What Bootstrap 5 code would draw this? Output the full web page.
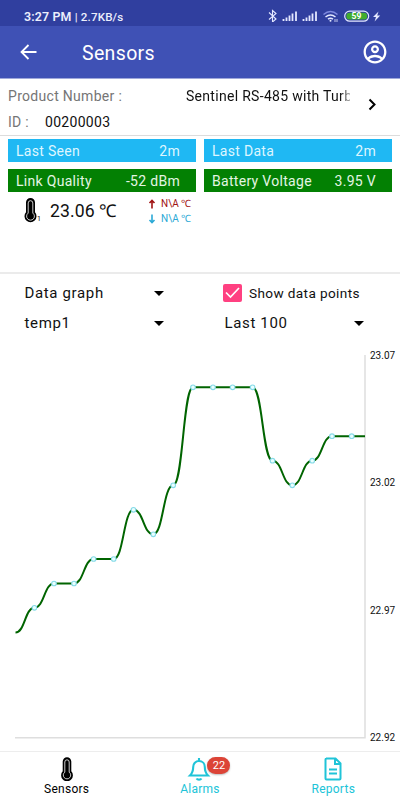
<!DOCTYPE html>
<html lang="en">
<head>
<meta charset="utf-8">
<meta name="viewport" content="width=device-width, initial-scale=1">
<title>Sensors</title>
<link href="https://cdn.jsdelivr.net/npm/bootstrap@5.3.0/dist/css/bootstrap.min.css" rel="stylesheet">
<style>
body{font-family:Roboto,"Liberation Sans",sans-serif;width:400px;height:800px;font-size:14px;letter-spacing:.3px;color:#111;line-height:20px}
svg{display:block;flex:none}
.status-bar{height:26px;background:#303f9f;padding:9px 19px 0 24px;color:#eceefc;font-size:12.400px;font-weight:600;letter-spacing:.15px}
.status-bar small{font-size:11.600px;font-weight:500}
.status-icons{margin-top:-1px}
.app-bar{height:52px;background:#3f51b5;color:#fff;padding:0 13px 0 18px}
.app-title{font-size:19.500px;letter-spacing:.35px;margin-left:42px;padding-top:3px}
.product{height:58px;padding:7px 23px 0 8px;border-top:1px solid #9fa8da;border-bottom:1px solid #dcdcdc}
.muted{color:#757575}
.fade-end{width:164px;white-space:nowrap;-webkit-mask-image:linear-gradient(90deg,#000 94%,transparent 103%);mask-image:linear-gradient(90deg,#000 94%,transparent 103%)}
.tiles{padding:3px 8px 0;display:grid;grid-template-columns:1fr 1fr;column-gap:8px;row-gap:7px}
.tile{height:23px;padding:2px 16px 0 8px;color:#def6ff;background:#1fb8f3}
.tile-ok{background:#038003;color:#e4f6e4}
.reading{height:82px;padding:5px 0 0 23px;border-bottom:2px solid #ebebeb}
.temp{font-size:17.600px;letter-spacing:.1px;line-height:28px;margin-left:8px;width:97px}
.limits{font-size:10px;line-height:15px;letter-spacing:.05px;margin-top:-1px}
.up{color:#a01313}.down{color:#2ba9d6}
.controls{padding:4px 0 0 24.500px;display:grid;grid-template-columns:200px 1fr;height:66px;grid-auto-rows:30px;font-size:15px;letter-spacing:.65px}
.pick{width:139.500px}
.check{width:19px;height:18px;border-radius:2px;background:#ff4081;margin-left:-1.500px}
.plot{height:411px}
.plot text{font-size:10px;letter-spacing:0;fill:#111}
.tabs{height:49px;border-top:1px solid #ededed;font-size:12px;letter-spacing:.25px;line-height:16px;color:#20c4d8}
.tab{width:133.33px;padding-top:5px}
.count{position:absolute;left:8px;top:0;width:23px;height:17px;line-height:17px;border-radius:9px;background:#dc4437;color:#fff;font-size:11px;letter-spacing:0;text-align:center;box-shadow:0 1px 2px #0004}
</style>
</head>
<body class="bg-white overflow-hidden">
<header>
<div class="status-bar d-flex justify-content-between">
<div class="lh-sm text-nowrap" id="clock">3:27 PM <small>| 2.7KB/s</small></div>
<svg class="status-icons" width="114" height="14" viewBox="267 8 114 14" fill="none" stroke="#e4e8ff">
<path d="M269 12.5l7 6.5-3.5 3V10.5l3.500 3-7 6" stroke-width="1.1"/>
<g stroke-width="1.8"><path d="M283.500 21v-2M286.500 21v-3.500M289.500 21v-5.500M292.500 21v-7.500M296 21V11.500"/><path d="M303.500 21v-2M306.500 21v-3.500M309.500 21v-5.500M312.500 21v-7.500M316 21V11.500"/></g>
<path d="M323.500 14.500q7-6 14 0" stroke="#7f8ae0" stroke-width="1.500"/><path d="M325.500 17q5-4 10 0M328 19.200q2.500-2 5 0" stroke-width="1.500"/><circle cx="330.500" cy="20.800" r="1" fill="#e4e8ff" stroke="none"/><path d="M335 19v3m2-3v3" stroke-width=".8"/>
<rect x="344.700" y="11.200" width="24" height="10" rx="5" fill="#303f9f" stroke-width="1.200"/><path d="M349.500 12.800H364q3.200 0 3.200 3.400t-3.200 3.400H349.500q-3.200 0-3.200-3.400t3.200-3.400z" fill="#42ad2e" stroke="none"/>
<text x="351.500" y="19.200" fill="#fff" stroke="none" font-size="8.500" font-weight="700" letter-spacing="0">59</text>
<path d="M378.500 11.500l-5.500 5.500h3l-1.400 4.500 5.600-6h-3l1.300-4z" fill="#e4e8ff" stroke="none"/>
</svg>
</div>
<div class="app-bar d-flex align-items-center">
<svg width="22" height="22" viewBox="0 0 22 22" fill="none" stroke="#fff" stroke-width="1.800"><path d="M18.500 11H4M10.500 4L3.500 11l7 7"/></svg>
<span class="app-title">Sensors</span>
<svg class="ms-auto" width="24" height="24" viewBox="1.500 1.500 21 21" fill="#fff"><path d="M12 2C6.480 2 2 6.480 2 12s4.480 10 10 10 10-4.480 10-10S17.520 2 12 2zM7.070 18.280c.43-.9 3.050-1.780 4.930-1.780s4.510.88 4.930 1.780C15.570 19.360 13.860 20 12 20s-3.570-.64-4.930-1.720zm11.290-1.450c-1.430-1.740-4.900-2.330-6.360-2.330s-4.930.59-6.360 2.330C4.620 15.490 4 13.820 4 12c0-4.410 3.590-8 8-8s8 3.590 8 8c0 1.820-.62 3.490-1.640 4.830zM12 6c-1.940 0-3.500 1.560-3.500 3.500S10.060 13 12 13s3.500-1.560 3.500-3.500S13.940 6 12 6zm0 5c-.83 0-1.500-.67-1.500-1.500S11.170 8 12 8s1.500.67 1.500 1.500S12.830 11 12 11z"/></svg>
</div>
</header>
<section class="product d-flex">
<div class="flex-grow-1">
<div class="d-flex justify-content-between"><span class="muted">Product Number :</span><span class="fade-end">Sentinel RS-485 with Turb</span></div>
<div class="d-flex" style="padding-top:6px"><span class="muted" style="width:37px">ID :</span><span>00200003</span></div>
</div>
<svg class="mt-2" style="margin-left:17px" width="10" height="20" viewBox="0 0 10 20" fill="none" stroke="#000" stroke-width="2"><path d="M2.500 5.500l5 5-5 5"/></svg>
</section>
<section class="tiles">
<div class="tile d-flex justify-content-between"><span>Last Seen</span><span>2m</span></div>
<div class="tile d-flex justify-content-between"><span>Last Data</span><span>2m</span></div>
<div class="tile tile-ok d-flex justify-content-between"><span>Link Quality</span><span>-52 dBm</span></div>
<div class="tile tile-ok d-flex justify-content-between"><span>Battery Voltage</span><span>3.95 V</span></div>
</section>
<section class="reading d-flex align-items-start">
<svg width="19" height="26" viewBox="0 0 19 26"><path d="M3 5.500a4.500 4.500 0 0 1 9 0v9.800a6 6 0 1 1-9 0z" fill="#000"/><path d="M5.200 6a2.300 2.300 0 0 1 4.600 0v10.100a3.900 3.900 0 1 1-4.600 0z" fill="none" stroke="#fff" stroke-width=".8"/><text x="14" y="24" font-size="7">1</text></svg>
<span class="temp">23.06 ℃</span>
<div class="limits">
<div class="up d-flex align-items-center"><svg width="14" height="10" viewBox="0 0 14 10" fill="none" stroke="currentColor" stroke-width="1.600"><path d="M5 9.500V1.500M2.500 4L5 1.500 7.500 4"/></svg>N\A ℃</div>
<div class="down d-flex align-items-center"><svg width="14" height="10" viewBox="0 0 14 10" fill="none" stroke="currentColor" stroke-width="1.600"><path d="M5 .5v8M2.500 6L5 8.500 7.500 6"/></svg>N\A ℃</div>
</div>
</section>
<section class="controls align-items-center">
<div class="pick d-flex align-items-center justify-content-between"><span>Data graph</span><svg width="10" height="5" viewBox="0 0 10 5"><path d="M0 0h10L5 5z"/></svg></div>
<div class="d-flex align-items-center"><span class="check"><svg width="19" height="18" viewBox="0 0 19 18" fill="none" stroke="#fff" stroke-width="1.700"><path d="M3 8.500l4.500 4.500 8.500-9"/></svg></span><span id="pts" style="margin-left:7px;font-size:13.600px;letter-spacing:.38px">Show data points</span></div>
<div class="pick d-flex align-items-center justify-content-between"><span>temp1</span><svg width="10" height="5" viewBox="0 0 10 5"><path d="M0 0h10L5 5z"/></svg></div>
<div class="pick d-flex align-items-center justify-content-between"><span>Last 100</span><svg width="10" height="5" viewBox="0 0 10 5"><path d="M0 0h10L5 5z"/></svg></div>
</section>
<section class="plot">
<svg width="400" height="411" viewBox="0 340 400 411">
<path d="M15 737.800H365V355" fill="none" stroke="#dedede" stroke-width="1.500"/>
<path id="curve" fill="none" stroke="#006400" stroke-width="2"/>
<g id="dots" fill="#eaffff" stroke="#87dbe8" stroke-width="1.100"></g>
<text x="370" y="358.500">23.07</text><text x="370" y="486">23.02</text><text x="370" y="613.500">22.97</text><text x="370" y="741">22.92</text>
</svg>
</section>
<nav class="tabs d-flex text-center">
<div class="tab text-black"><svg class="mx-auto" width="14" height="24" viewBox="0 0 14 24"><path d="M2.700 4.500a4.300 4.300 0 0 1 8.600 0v9.800a5.900 5.900 0 1 1-8.600 0z" fill="#000"/><path d="M4.800 5a2.200 2.200 0 0 1 4.400 0v10.200a3.700 3.700 0 1 1-4.400 0z" fill="none" stroke="#fff" stroke-width=".8"/></svg>Sensors</div>
<div class="tab"><div class="position-relative mx-auto" style="width:1px;height:24px"><svg style="margin-left:-12px" width="24" height="24" viewBox="0 0 24 24" fill="none" stroke="currentColor" stroke-width="2.100"><path d="M3 18.500c2-2 3.200-4 3.200-8.500 0-3.500 2.500-6 5.800-6s5.800 2.500 5.800 6c0 4.500 1.200 6.500 3.200 8.500zM12 1v3M9.500 21.500c1 1.500 4 1.500 5 0"/></svg><span class="count">22</span></div>Alarms</div>
<div class="tab"><svg class="mx-auto" width="18" height="24" viewBox="0 0 18 24" fill="none" stroke="currentColor" stroke-width="2"><path d="M2 1.500h9.500l5 5v15q0 1-1 1h-13q-1 0-1-1v-19q0-1 1-1zM11 1.500v5.500h5.500M5 12.500h8M5 16.500h8"/></svg>Reports</div>
</nav>
<script src="https://cdn.jsdelivr.net/npm/bootstrap@5.3.0/dist/js/bootstrap.bundle.min.js"></script>
<script>
const points=[[15.5,632.5],[34.4,607.8],[54,583.5],[74,583.5],[93.6,559],[113.7,559],[133.5,509.8],[153.3,534.3],[173.2,485.3],[193,387.3],[213,387.3],[232.6,387.3],[252.6,387.3],[272.5,460.7],[292.3,485.3],[312.2,460.7],[332,436.2],[351.7,436.2],[365,436.2]];
let d='M'+points[0];
for(let i=1;i<points.length;i++){const [a,b]=points[i-1],[x,y]=points[i],m=(a+x)/2;d+=`C${m} ${b} ${m} ${y} ${x} ${y}`}
document.getElementById('curve').setAttribute('d',d);
document.getElementById('dots').innerHTML=points.slice(1,-1).map(([x,y])=>`<circle cx="${x}" cy="${y}" r="2.300"/>`).join('');
</script>
</body>
</html>
